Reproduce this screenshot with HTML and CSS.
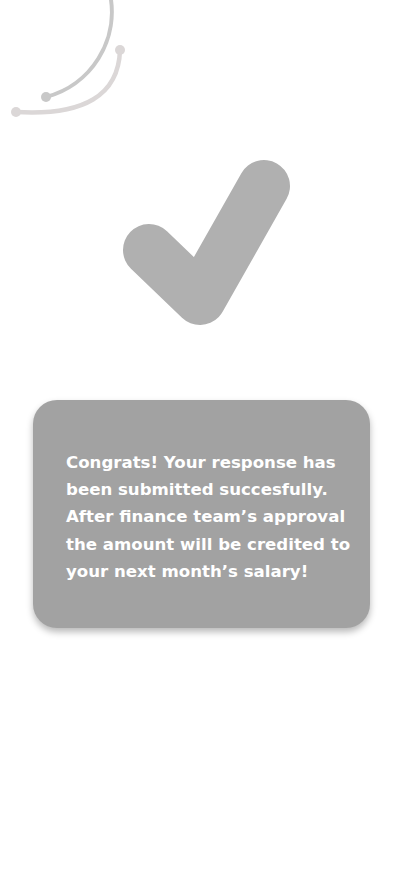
FILE: index.html
```html
<!DOCTYPE html>
<html>
<head>
<meta charset="utf-8">
<link rel="stylesheet" href="styles.css">
</head>
<body>
<div class="page">
  <svg class="deco" viewBox="0 0 414 150" width="414" height="150" aria-hidden="true">
    <path d="M110,-6 A88,88 0 0 1 46,97" fill="none" stroke="#c8c8c8" stroke-width="4" stroke-linecap="round"/>
    <circle cx="46" cy="97" r="5" fill="#c8c8c8"/>
    <path d="M120,50 Q118,118 16,112" fill="none" stroke="#dbd7d7" stroke-width="4.5" stroke-linecap="round"/>
    <circle cx="120" cy="50" r="5" fill="#dbd7d7"/>
    <circle cx="16" cy="112" r="5" fill="#dbd7d7"/>
  </svg>
  <svg class="check" viewBox="0 150 414 200" width="414" height="200" aria-hidden="true">
    <polyline points="149,250 200,299 264,186" fill="none" stroke="#b0b0b0" stroke-width="52" stroke-linecap="round" stroke-linejoin="round"/>
  </svg>
  <div class="card">
    <p class="msg">Congrats! Your response has<br>been submitted succesfully.<br>After finance team’s approval<br>the amount will be credited to<br>your next month’s salary!</p>
  </div>
</div>
</body>
</html>
```
FILE: styles.css
```css
html, body {
  margin: 0;
  padding: 0;
  background: #ffffff;
}
.page {
  width: 414px;
  height: 896px;
  display: flex;
  flex-direction: column;
}
.deco, .check {
  display: block;
}
.card {
  margin: 50px 0 0 33px;
  width: 337px;
  height: 228px;
  box-sizing: border-box;
  background: #a2a2a2;
  border-radius: 24px;
  box-shadow: 0 4px 7px rgba(0, 0, 0, 0.28);
  display: flex;
  align-items: center;
  padding: 6px 0 0 33px;
}
.msg {
  margin: 0;
  color: #ffffff;
  font-family: "DejaVu Sans", sans-serif;
  font-weight: 700;
  font-size: 16.6px;
  line-height: 27.2px;
  white-space: nowrap;
}
```
